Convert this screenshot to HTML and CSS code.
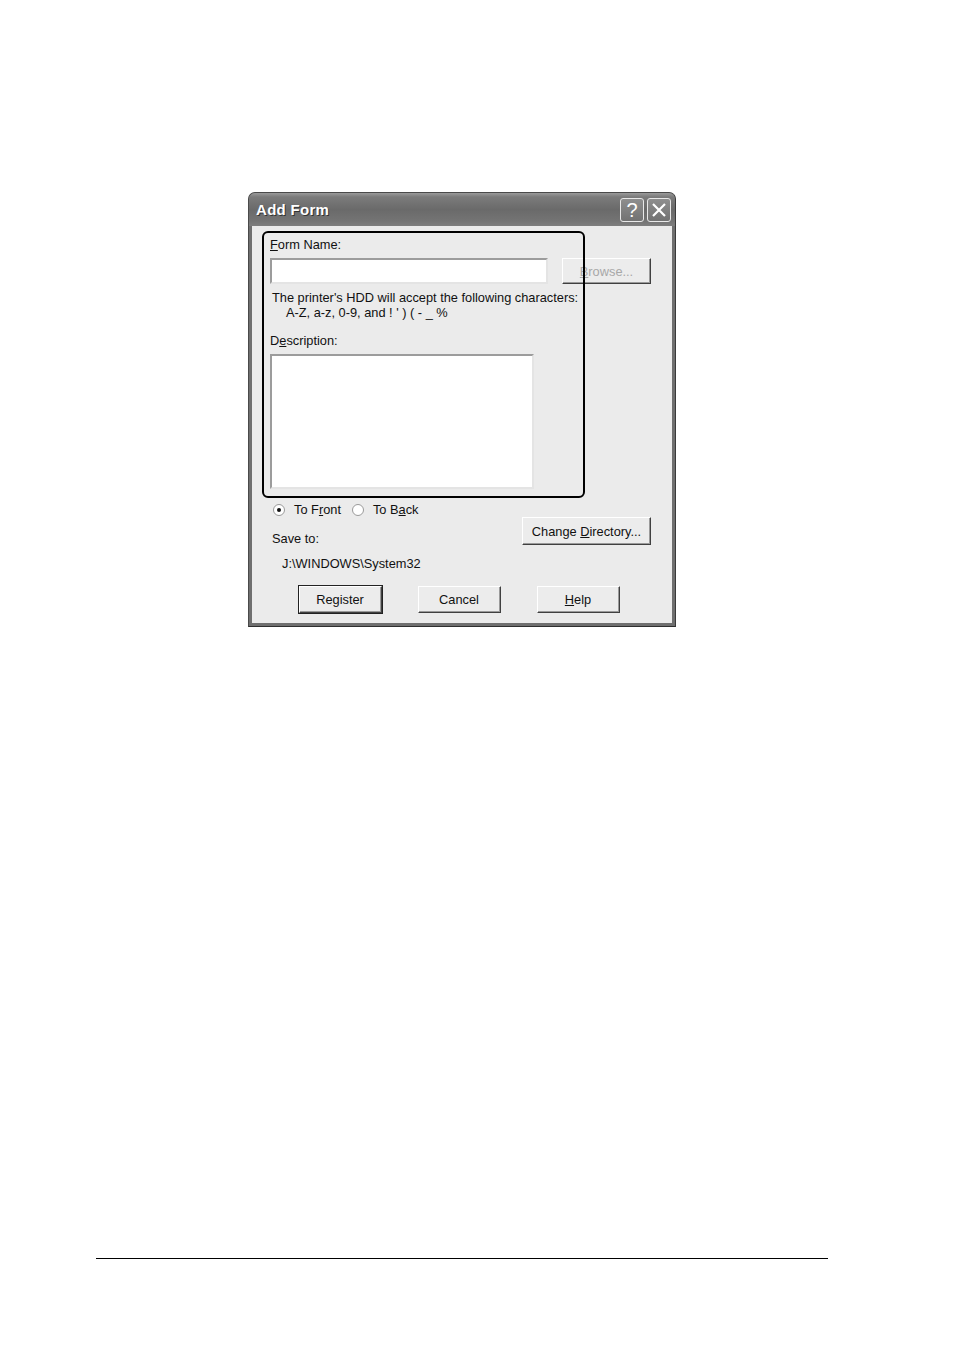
FILE: index.html
```html
<!DOCTYPE html>
<html lang="en">
<head>
    <meta charset="UTF-8">
    <title>Add Form</title>
    <link rel="stylesheet" href="styles.css">
</head>
<body>
    <div class="dialog">
        <!-- Title bar -->
        <div class="titlebar">
            <span class="title">Add Form</span>
            <div class="caption-btns">
                <span class="cap-btn">?</span>
                <span class="cap-btn">
                    <svg width="16" height="16" viewBox="0 0 16 16"><path d="M2 2 L14 14 M14 2 L2 14" stroke="#fff" stroke-width="2.2" fill="none"/></svg>
                </span>
            </div>
        </div>

        <div class="client">
            <!-- Form name -->
            <div class="label"><u>F</u>orm Name:</div>
            <div class="name-row">
                <div class="field name-field"></div>
                <button type="button" class="btn browse"><u>B</u>rowse...</button>
            </div>
            <p class="hint">The printer's HDD will accept the following characters:<br><span class="indent">A-Z, a-z, 0-9, and ! ' ) ( - _ %</span></p>

            <!-- Description -->
            <div class="label desc-label">D<u>e</u>scription:</div>
            <div class="field desc-field"></div>

            <!-- Position -->
            <div class="radios">
                <span class="radio checked"></span><span class="radio-text">To F<u>r</u>ont</span>
                <span class="radio"></span><span class="radio-text">To B<u>a</u>ck</span>
            </div>

            <div class="save-row">
                <div class="save-info">
                    <div>Save to:</div>
                    <div class="path">J:\WINDOWS\System32</div>
                </div>
                <button type="button" class="btn change-dir">Change <u>D</u>irectory...</button>
            </div>

            <div class="actions">
                <button type="button" class="btn default">Re<u>g</u>ister</button>
                <button type="button" class="btn">Cancel</button>
                <button type="button" class="btn help-btn"><u>H</u>elp</button>
            </div>

            <!-- callout frame drawn over the dialog -->
            <div class="callout"></div>
        </div>
    </div>

    <div class="page-rule"></div>
</body>
</html>
```

FILE: styles.css
```css
/* Base */
* {
    margin: 0;
    padding: 0;
    box-sizing: border-box;
}
body {
    background: #fff;
    font-family: 'Liberation Sans', Arial, sans-serif;
    font-size: 12.8px;
    line-height: 15px;
    color: #111;
}

/* Dialog window */
.dialog {
    position: relative;
    width: 428px;
    height: 435px;
    margin: 192px 0 0 248px;
    background: #6f6f6f;
    border-radius: 7px 7px 0 0;
    border: 1px solid #4a4a4a;
    border-bottom-color: #2e2e2e;
    border-right-color: #3a3a3a;
    display: flex;
    flex-direction: column;
}

.titlebar {
    height: 33px;
    display: flex;
    align-items: center;
    justify-content: space-between;
    padding: 0 4px 0 7px;
    background: linear-gradient(#9a9a9a 0%, #7b7b7b 12%, #6a6a6a 50%, #747474 85%, #7e7e7e 100%);
    border-radius: 6px 6px 0 0;
}
.title {
    color: #fff;
    font-weight: bold;
    font-size: 15px;
    letter-spacing: 0.3px;
    text-shadow: 1px 1px 0 #333;
}
.caption-btns {
    display: flex;
    gap: 3px;
}
.cap-btn {
    width: 24px;
    height: 24px;
    border: 1px solid #e8e8e8;
    border-radius: 3px;
    background: linear-gradient(#8e8e8e, #727272);
    color: #fff;
    font-size: 20px;
    line-height: 22px;
    text-align: center;
    display: flex;
    align-items: center;
    justify-content: center;
}

.client {
    position: relative;
    flex: 1;
    margin: 0 3px 3px 3px;
    background: #ebebeb;
    padding: 11px 21px 10px 18px;
}

.label {
    height: 15px;
}

.name-row {
    display: flex;
    justify-content: space-between;
    margin-top: 6px;
}

.field {
    background: #fff;
    border: 2px solid;
    border-color: #9c9c9c #e4e4e4 #e4e4e4 #9c9c9c;
}
.name-field {
    width: 278px;
    height: 26px;
}
.desc-field {
    width: 264px;
    height: 135px;
    margin-top: 6px;
}

.hint {
    margin: 6px 0 0 2px;
}
.indent {
    padding-left: 14px;
}
.desc-label {
    margin-top: 13px;
}

/* Buttons */
.btn {
    font-family: inherit;
    font-size: 12.8px;
    color: #111;
    background: #ececec;
    border: 1px solid;
    border-color: #fff #404040 #404040 #fff;
    box-shadow: inset -1px -1px 0 #9a9a9a;
    height: 27px;
    width: 83px;
}
.browse {
    width: 89px;
    height: 26px;
    color: #a8a8a8;
}
.change-dir {
    width: 129px;
    height: 28px;
    margin-top: 0;
}
.default {
    outline: 1px solid #222;
    border-color: #fff #404040 #404040 #fff;
}

/* Radios */
.radios {
    display: flex;
    align-items: center;
    margin: 13px 0 0 3px;
    height: 15px;
}
.radio {
    width: 12px;
    height: 12px;
    border-radius: 50%;
    background: #fff;
    border: 1px solid #9a9a9a;
    position: relative;
    margin-right: 9px;
}
.radio.checked::after {
    content: "";
    position: absolute;
    left: 3px;
    top: 3px;
    width: 4px;
    height: 4px;
    border-radius: 50%;
    background: #111;
}
.radio-text {
    margin-right: 11px;
}

.save-row {
    display: flex;
    justify-content: space-between;
    align-items: flex-start;
}
.save-info {
    padding: 14px 0 0 2px;
}
.path {
    margin: 10px 0 0 10px;
}

.actions {
    display: flex;
    justify-content: center;
    gap: 36px;
    margin: 15px 0 0 -3px;
}

/* annotation frame */
.callout {
    position: absolute;
    left: 10px;
    top: 5px;
    width: 323px;
    height: 267px;
    border: 2px solid #000;
    border-radius: 6px;
    pointer-events: none;
}

.page-rule {
    margin: 631px 0 0 96px;
    width: 732px;
    height: 1px;
    background: #000;
}
```
